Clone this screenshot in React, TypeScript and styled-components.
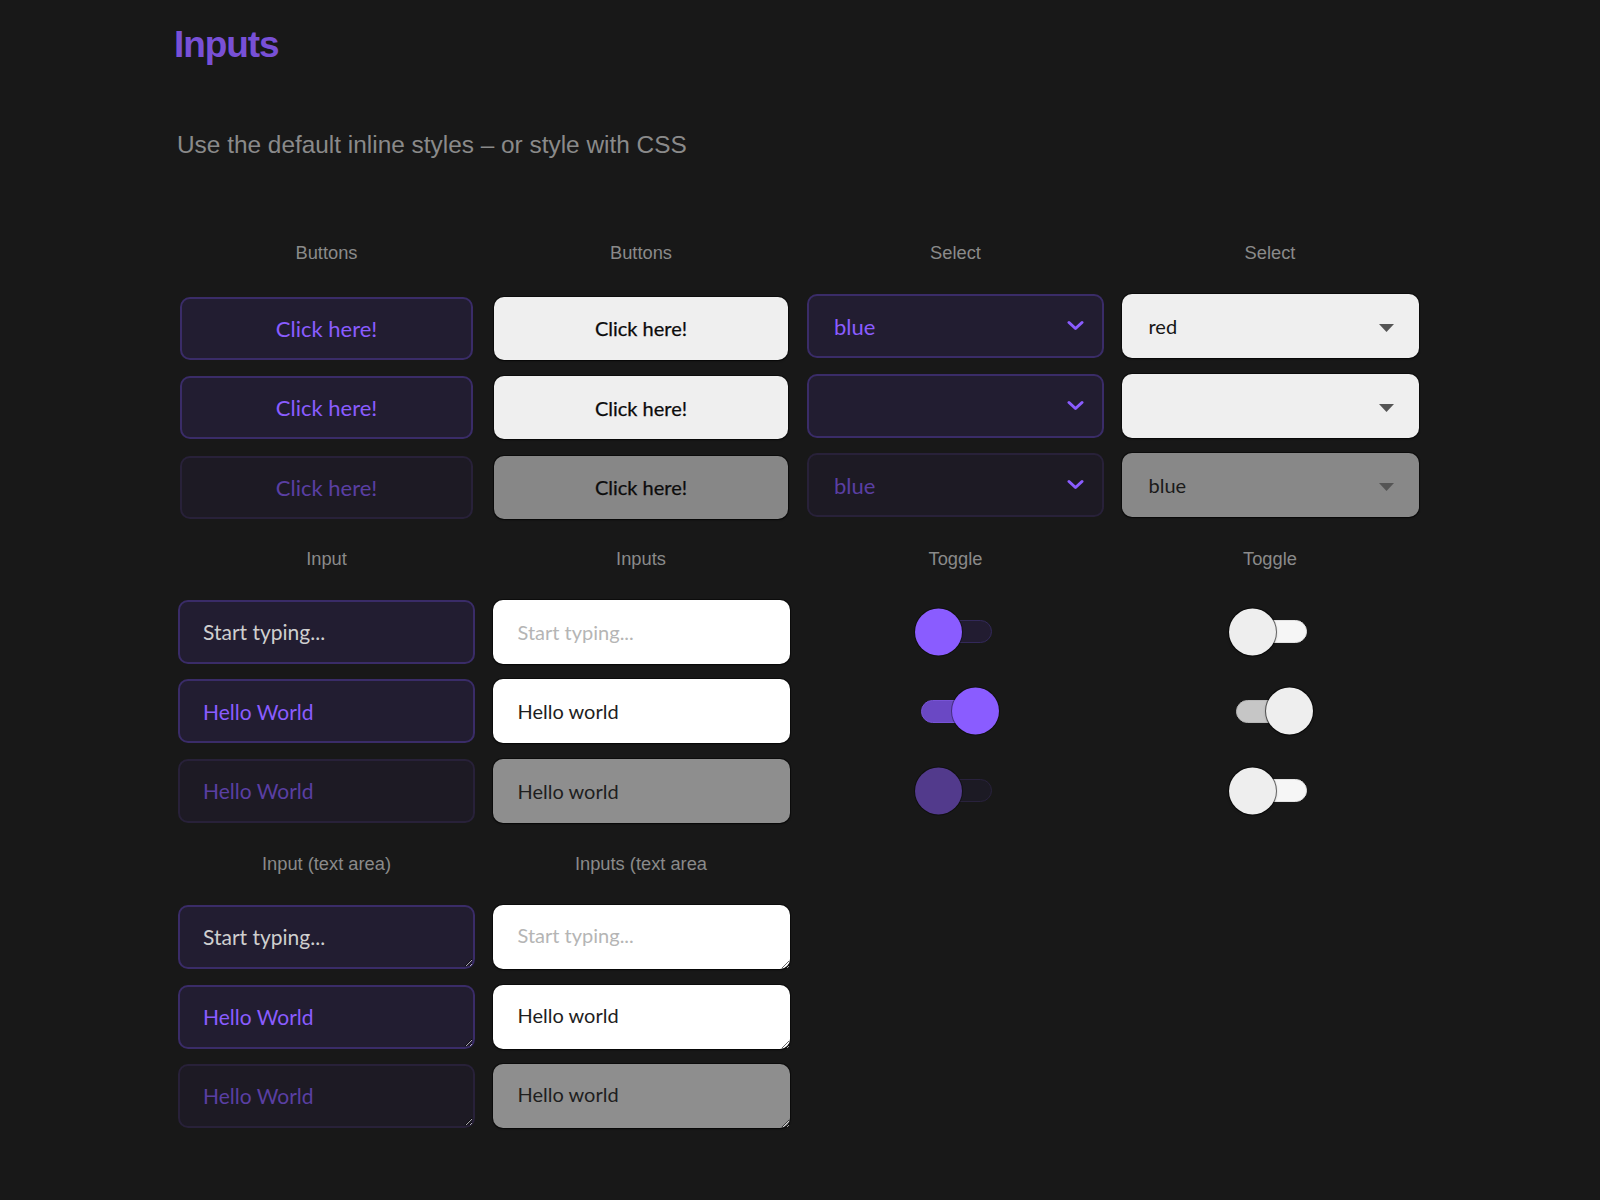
import React from "react";
import styled, { createGlobalStyle, css } from "styled-components";

const GlobalStyle = createGlobalStyle`
  html, body { margin: 0; padding: 0; background: #181818; }
  body { font-family: "Liberation Sans", Arial, sans-serif; min-height: 1200px; }
  * { box-sizing: border-box; }
`;

const UI_FONT = `Lato, "Noto Sans", sans-serif`;

const Page = styled.main`
  padding: 23px 0 60px 177px;
`;

const Title = styled.h1`
  margin: 0 0 0 -3px;
  font: 700 37px/44px "Liberation Sans", Arial, sans-serif;
  letter-spacing: -1.1px;
  color: #7850d6;
`;

const Subtitle = styled.p`
  margin: 64px 0 0;
  font: 400 24.4px/28px "Liberation Sans", Arial, sans-serif;
  color: #8a8a8a;
`;

const Grid = styled.div`
  margin: 83px 0 0 1px;
  display: grid;
  grid-template-columns: repeat(4, 297px);
  column-gap: 17.5px;
  row-gap: 30.7px;
`;

const Section = styled.section`
  display: flex;
  flex-direction: column;
`;

const Label = styled.h2`
  margin: 0;
  height: 22px;
  font: 400 18.3px/22px "Liberation Sans", Arial, sans-serif;
  color: #8a8a8a;
  text-align: center;
`;

const Stack = styled.div`
  margin-top: 30px;
  display: flex;
  flex-direction: column;
  gap: 15.5px;
`;

const Slot = styled.div`
  position: relative;
  height: 64px;
  display: flex;
  align-items: center;
  justify-content: center;
`;

type Variant = "dark" | "light";

const darkBox = css`
  background: #221d31;
  border: 2px solid #3a2c68;
  color: #8a5cff;
  &:disabled {
    background: #1d1a24;
    border-color: #282139;
    color: #5a3fa3;
    opacity: 1;
  }
`;

const lightBox = css`
  border: none;
  color: #161616;
  box-shadow: 0 0 0 1px rgba(0, 0, 0, 0.45), 0 1px 2px rgba(0, 0, 0, 0.5);
`;

const Button = styled.button<{ $variant: Variant }>`
  width: 293.5px;
  height: 63px;
  margin-top: 4.6px;
  border-radius: 10px;
  font-family: ${UI_FONT};
  cursor: pointer;
  ${(p) =>
    p.$variant === "dark"
      ? css`
          ${darkBox};
          font-size: 22px;
        `
      : css`
          ${lightBox};
          background: #efefef;
          color: #0c0c0c;
          font-size: 20px;
          -webkit-text-stroke: 0.25px #0c0c0c;
          &:disabled {
            background: #878787;
            color: #0c0c0c;
            opacity: 1;
          }
        `}
`;

const SelectWrap = styled.div`
  position: relative;
  width: 100%;
  height: 64px;
`;

const Select = styled.select<{ $variant: Variant }>`
  appearance: none;
  -webkit-appearance: none;
  width: 100%;
  height: 64px;
  border-radius: 10px;
  padding: 0 50px 0 25px;
  font-family: ${UI_FONT};
  outline: none;
  opacity: 1;
  ${(p) =>
    p.$variant === "dark"
      ? css`
          ${darkBox};
          font-size: 22px;
        `
      : css`
          ${lightBox};
          background: #efefef;
          padding-left: 27px;
          font-size: 20px;
          &:disabled {
            background: #888888;
            color: #1a1a1a;
            opacity: 1;
          }
        `}
`;

const SelectIcon = styled.span<{ $variant: Variant }>`
  position: absolute;
  top: 50%;
  display: flex;
  pointer-events: none;
  ${(p) =>
    p.$variant === "dark"
      ? css`
          right: 20px;
          transform: translateY(-55%);
        `
      : css`
          right: 25px;
          transform: translateY(-25%);
        `}
`;

const fieldBase = css<{ $variant: Variant }>`
  width: 100%;
  height: 64px;
  border-radius: 10px;
  padding: 0 24px 0 23px;
  font-family: ${UI_FONT};
  outline: none;
  ${(p) =>
    p.$variant === "dark"
      ? css`
          ${darkBox};
          font-size: 21px;
          &::placeholder {
            color: #cfcfcf;
          }
        `
      : css`
          ${lightBox};
          background: #ffffff;
          color: #1e1e1e;
          padding-left: 25px;
          font-size: 20px;
          &::placeholder {
            color: #b5b5b5;
          }
          &:disabled {
            background: #8e8e8e;
            color: #1e1e1e;
            opacity: 1;
          }
        `}
`;

const Input = styled.input<{ $variant: Variant }>`
  ${fieldBase}
`;

const TextArea = styled.textarea<{ $variant: Variant }>`
  ${fieldBase}
  display: block;
  padding-top: 17px;
  padding-bottom: 17px;
  line-height: 26px;
  resize: vertical;
  overflow: hidden;
`;

const Track = styled.button<{ $variant: Variant; $on: boolean }>`
  position: relative;
  width: 71px;
  height: 23px;
  margin-left: 2px;
  padding: 0;
  border-radius: 12px;
  border: 1.5px solid;
  cursor: pointer;
  ${(p) =>
    p.$variant === "dark"
      ? p.$on
        ? css`
            background: #6a48c4;
            border-color: #7753d6;
          `
        : css`
            background: #221c31;
            border-color: #33295a;
            &:disabled {
              background: #1c1a24;
              border-color: #29223d;
            }
          `
      : p.$on
      ? css`
          background: #c6c6c6;
          border-color: #b8b8b8;
        `
      : css`
          background: #f6f6f6;
          border-color: #e2e2e2;
        `}
`;

const Knob = styled.span<{ $variant: Variant; $on: boolean; $disabled?: boolean }>`
  position: absolute;
  top: 50%;
  width: 47px;
  height: 47px;
  border-radius: 50%;
  transform: translateY(-50%);
  ${(p) =>
    p.$on
      ? css`
          right: -7.5px;
        `
      : css`
          left: -7.5px;
        `}
  ${(p) =>
    p.$variant === "dark"
      ? css`
          background: ${p.$disabled ? "#523a8c" : "#8a5cff"};
          box-shadow: 0 0 0 1px rgba(0, 0, 0, 0.35);
        `
      : css`
          background: #eeeeee;
          box-shadow: 0 0 0 1px rgba(0, 0, 0, 0.55), 0 1px 3px rgba(0, 0, 0, 0.35);
        `}
`;

const Chevron = () => (
  <svg width="17" height="10" viewBox="0 0 17 10" aria-hidden="true">
    <polyline
      points="2,2 8.5,8 15,2"
      fill="none"
      stroke="#8a5cff"
      strokeWidth="3"
      strokeLinecap="round"
      strokeLinejoin="round"
    />
  </svg>
);

const Caret = () => (
  <svg width="15" height="8" viewBox="0 0 15 8" aria-hidden="true">
    <polygon points="0,0 15,0 7.5,8" fill="#555555" />
  </svg>
);

const ButtonColumn = ({ variant }: { variant: Variant }) => (
  <Section>
    <Label>Buttons</Label>
    <Stack>
      <Slot>
        <Button $variant={variant}>Click here!</Button>
      </Slot>
      <Slot>
        <Button $variant={variant}>Click here!</Button>
      </Slot>
      <Slot>
        <Button $variant={variant} disabled>
          Click here!
        </Button>
      </Slot>
    </Stack>
  </Section>
);

const SelectField = ({
  variant,
  value,
  disabled,
}: {
  variant: Variant;
  value: string;
  disabled?: boolean;
}) => (
  <SelectWrap>
    <Select $variant={variant} defaultValue={value} disabled={disabled}>
      <option value=""></option>
      <option value="red">red</option>
      <option value="blue">blue</option>
      <option value="green">green</option>
    </Select>
    <SelectIcon $variant={variant}>{variant === "dark" ? <Chevron /> : <Caret />}</SelectIcon>
  </SelectWrap>
);

const SelectColumn = ({ variant, first }: { variant: Variant; first: string }) => (
  <Section>
    <Label>Select</Label>
    <Stack>
      <Slot>
        <SelectField variant={variant} value={first} />
      </Slot>
      <Slot>
        <SelectField variant={variant} value="" />
      </Slot>
      <Slot>
        <SelectField variant={variant} value="blue" disabled />
      </Slot>
    </Stack>
  </Section>
);

const InputColumn = ({
  variant,
  label,
  area,
}: {
  variant: Variant;
  label: string;
  area?: boolean;
}) => {
  const hello = variant === "dark" ? "Hello World" : "Hello world";
  const Field: any = area ? TextArea : Input;
  const extra = area ? { rows: 1 } : { type: "text" };
  return (
    <Section>
      <Label>{label}</Label>
      <Stack>
        <Slot>
          <Field $variant={variant} placeholder="Start typing..." {...extra} />
        </Slot>
        <Slot>
          <Field $variant={variant} defaultValue={hello} {...extra} />
        </Slot>
        <Slot>
          <Field $variant={variant} defaultValue={hello} disabled {...extra} />
        </Slot>
      </Stack>
    </Section>
  );
};

const Toggle = ({
  variant,
  on,
  disabled,
}: {
  variant: Variant;
  on: boolean;
  disabled?: boolean;
}) => (
  <Track role="switch" aria-checked={on} $variant={variant} $on={on} disabled={disabled}>
    <Knob $variant={variant} $on={on} $disabled={disabled} />
  </Track>
);

const ToggleColumn = ({ variant }: { variant: Variant }) => (
  <Section>
    <Label>Toggle</Label>
    <Stack>
      <Slot>
        <Toggle variant={variant} on={false} />
      </Slot>
      <Slot>
        <Toggle variant={variant} on />
      </Slot>
      <Slot>
        <Toggle variant={variant} on={false} disabled />
      </Slot>
    </Stack>
  </Section>
);

export default function App() {
  return (
    <>
      <GlobalStyle />
      <Page>
        <Title>Inputs</Title>
        <Subtitle>Use the default inline styles – or style with CSS</Subtitle>
        <Grid>
          <ButtonColumn variant="dark" />
          <ButtonColumn variant="light" />
          <SelectColumn variant="dark" first="blue" />
          <SelectColumn variant="light" first="red" />

          <InputColumn variant="dark" label="Input" />
          <InputColumn variant="light" label="Inputs" />
          <ToggleColumn variant="dark" />
          <ToggleColumn variant="light" />

          <InputColumn variant="dark" label="Input (text area)" area />
          <InputColumn variant="light" label="Inputs (text area" area />
        </Grid>
      </Page>
    </>
  );
}
